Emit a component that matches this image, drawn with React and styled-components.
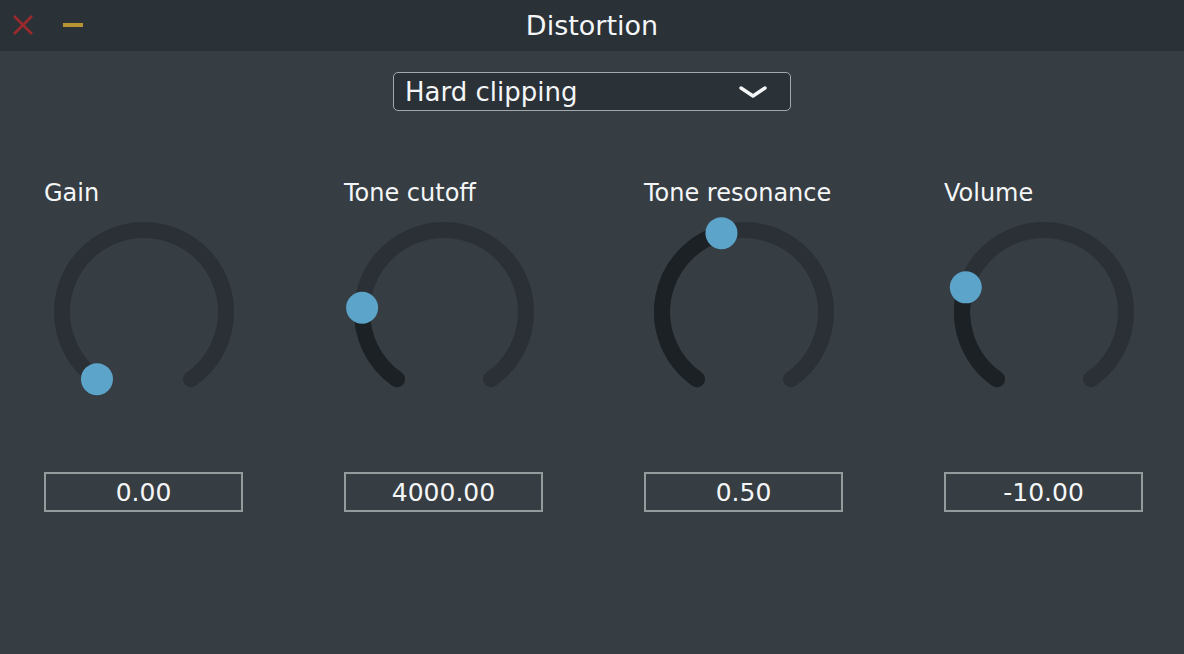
import styled, { createGlobalStyle } from "styled-components";

const GlobalStyle = createGlobalStyle`
  html, body { margin: 0; padding: 0; background: #363d43; }
  body { font-family: "DejaVu Sans", "Liberation Sans", sans-serif; color: #f4f6f7; }
`;

const knobs = [
  { label: "Gain", value: "0.00", pos: 0 },
  { label: "Tone cutoff", value: "4000.00", pos: 0.2 },
  { label: "Tone resonance", value: "0.50", pos: 0.445 },
  { label: "Volume", value: "-10.00", pos: 0.25 },
];

const START = -145;
const SWEEP = 290;
const R = 82;
const C = 100;

const point = (deg) => {
  const rad = (deg * Math.PI) / 180;
  return [C + R * Math.sin(rad), C - R * Math.cos(rad)];
};

const arc = (from, to) => {
  const [x1, y1] = point(from);
  const [x2, y2] = point(to);
  const large = to - from > 180 ? 1 : 0;
  return `M ${x1} ${y1} A ${R} ${R} 0 ${large} 1 ${x2} ${y2}`;
};

const Knob = ({ pos }) => {
  const angle = START + SWEEP * pos;
  const [tx, ty] = point(angle);
  return (
    <KnobSvg width="200" height="200" viewBox="0 0 200 200">
      <path d={arc(START, START + SWEEP)} stroke="#2a3036" strokeWidth="16" fill="none" strokeLinecap="round" />
      {pos > 0 && (
        <path d={arc(START, angle)} stroke="#1c2125" strokeWidth="16" fill="none" strokeLinecap="round" />
      )}
      <circle cx={tx} cy={ty} r="16" fill="#5ca4c9" />
    </KnobSvg>
  );
};

const App = () => {
  return (
    <>
      <GlobalStyle />
      <Window>
        <TitleBar>
          <WinButtons>
            <svg width="22" height="22" viewBox="0 0 22 22">
              <path d="M2 2 L20 20 M20 2 L2 20" stroke="#9a2a2c" strokeWidth="2.6" />
            </svg>
            <Minus />
          </WinButtons>
          <Title>Distortion</Title>
        </TitleBar>
        <Body>
          <Select>
            <span>Hard clipping</span>
            <svg width="30" height="16" viewBox="0 0 30 16">
              <path d="M3 4 L15 12 L27 4" stroke="#f4f6f7" strokeWidth="3.4" fill="none" strokeLinecap="round" strokeLinejoin="round" />
            </svg>
          </Select>
          <Columns>
            {knobs.map((k) => (
              <Column key={k.label}>
                <Label>{k.label}</Label>
                <Knob pos={k.pos} />
                <ValueBox>{k.value}</ValueBox>
              </Column>
            ))}
          </Columns>
        </Body>
      </Window>
    </>
  );
};

export default App;

const Window = styled.div`
  width: 1184px;
  height: 654px;
  background: #363d43;
  display: flex;
  flex-direction: column;
`;

const TitleBar = styled.div`
  height: 51px;
  background: #2a3137;
  display: flex;
  align-items: center;
  justify-content: center;
  position: relative;
`;

const WinButtons = styled.div`
  position: absolute;
  left: 12px;
  top: 14px;
  display: flex;
  align-items: center;
  gap: 29px;
`;

const Minus = styled.div`
  width: 20px;
  height: 4px;
  background: #b59431;
`;

const Title = styled.div`
  font-size: 27px;
  line-height: 32px;
`;

const Body = styled.div`
  display: flex;
  flex-direction: column;
  align-items: center;
  padding-top: 21px;
`;

const Select = styled.div`
  width: 398px;
  height: 39px;
  box-sizing: border-box;
  border: 1.5px solid #a3a9ab;
  border-radius: 5px;
  background: #2a3137;
  display: flex;
  align-items: center;
  justify-content: space-between;
  padding: 0 22px 0 11px;
  font-size: 26px;
`;

const Columns = styled.div`
  margin-top: 69px;
  align-self: stretch;
  padding-left: 44px;
  display: grid;
  grid-template-columns: repeat(4, 200px);
  column-gap: 100px;
`;

const Column = styled.div`
  display: flex;
  flex-direction: column;
`;

const Label = styled.div`
  height: 26px;
  line-height: 26px;
  font-size: 24px;
  white-space: nowrap;
`;

const KnobSvg = styled.svg`
  display: block;
  margin-top: 6px;
`;

const ValueBox = styled.div`
  margin-top: 60px;
  width: 199px;
  height: 40px;
  box-sizing: border-box;
  border: 2px solid #949b9d;
  display: flex;
  align-items: center;
  justify-content: center;
  font-size: 25px;
`;
